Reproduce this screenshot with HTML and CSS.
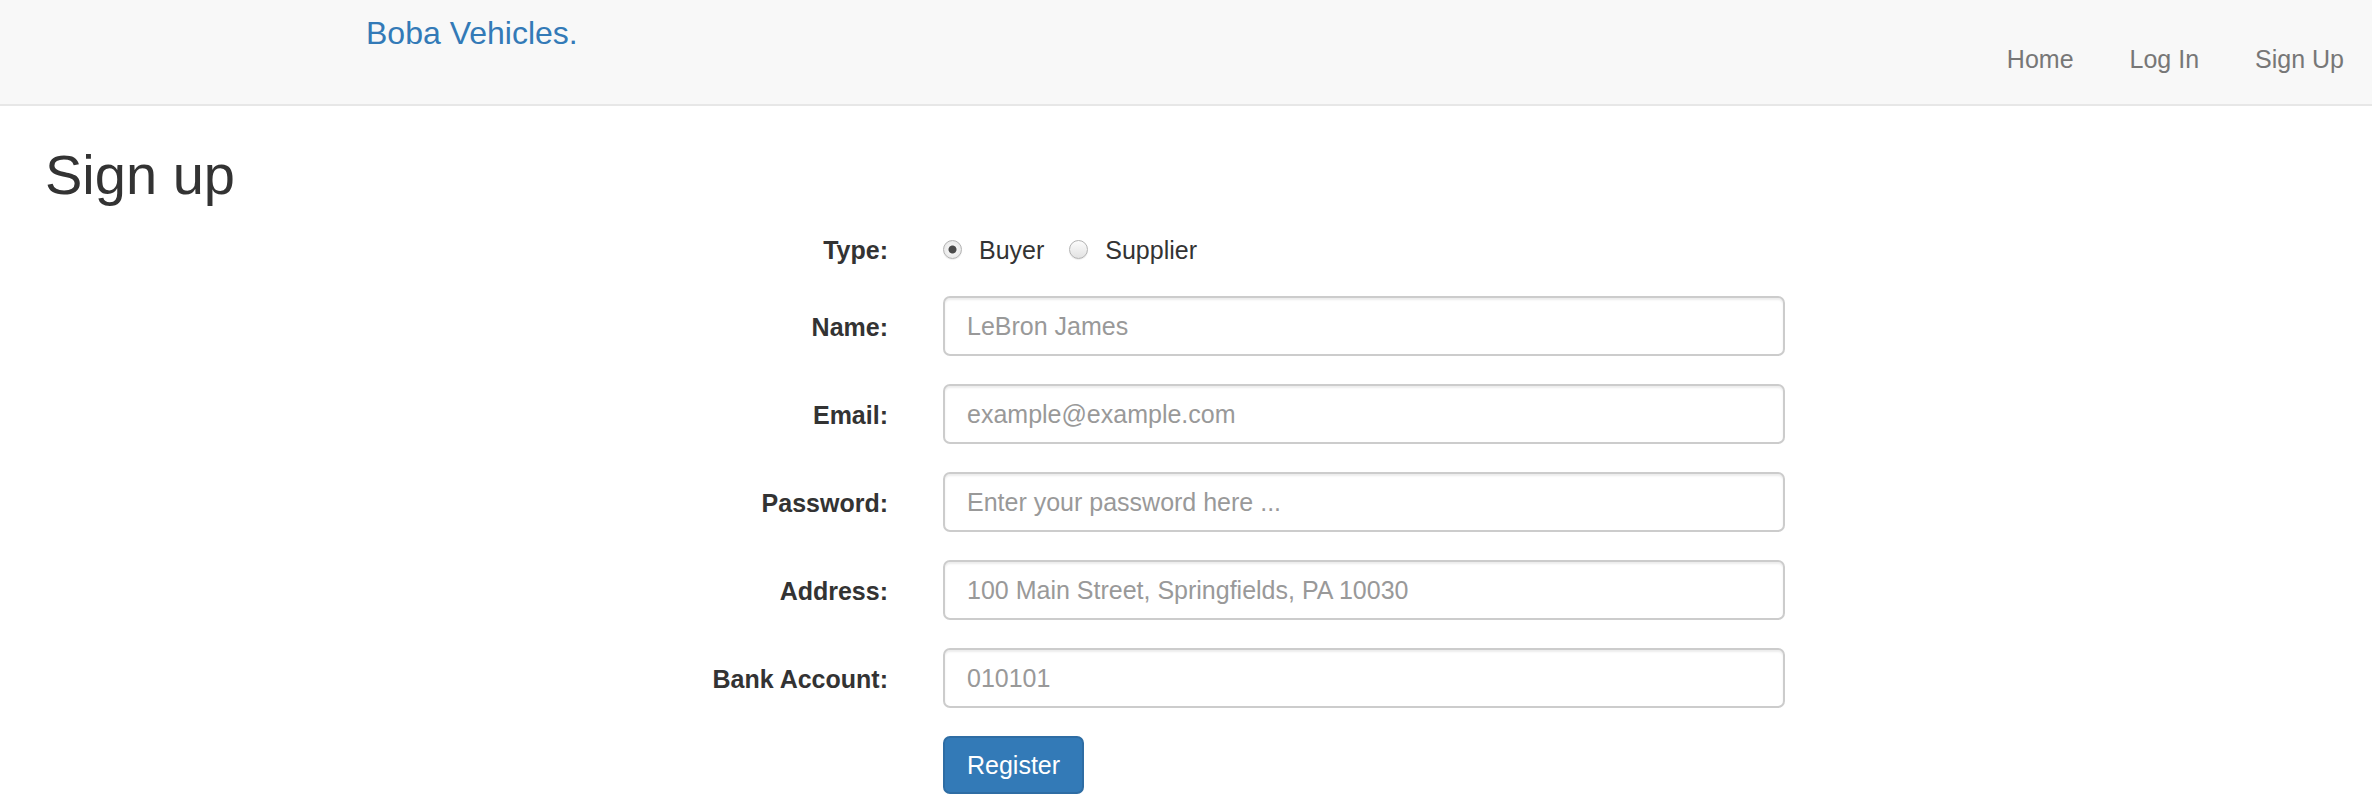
FILE: index.html
```html
<!DOCTYPE html>
<html lang="en">
<head>
<meta charset="utf-8">
<title>Boba Vehicles - Sign up</title>
<link rel="stylesheet" href="styles.css">
</head>
<body>
<nav class="navbar">
  <a class="brand" href="#">Boba Vehicles.</a>
  <ul class="nav">
    <li><a href="#">Home</a></li>
    <li><a href="#">Log In</a></li>
    <li><a href="#">Sign Up</a></li>
  </ul>
</nav>
<main class="page">
  <h2 class="title">Sign up</h2>
  <form class="form">
    <label class="label">Type:</label>
    <div class="radios">
      <label class="radio"><input type="radio" name="type" checked> Buyer</label>
      <label class="radio"><input type="radio" name="type"> Supplier</label>
    </div>
    <label class="label" for="name">Name:</label>
    <input class="control" id="name" type="text" placeholder="LeBron James">
    <label class="label" for="email">Email:</label>
    <input class="control" id="email" type="text" placeholder="example@example.com">
    <label class="label" for="pw">Password:</label>
    <input class="control" id="pw" type="password" placeholder="Enter your password here ...">
    <label class="label" for="addr">Address:</label>
    <input class="control" id="addr" type="text" placeholder="100 Main Street, Springfields, PA 10030">
    <label class="label" for="bank">Bank Account:</label>
    <input class="control" id="bank" type="text" placeholder="010101">
    <span></span>
    <div><button class="btn" type="button">Register</button></div>
  </form>
</main>
</body>
</html>
```
FILE: styles.css
```css
* { box-sizing: border-box; }
html, body { margin: 0; padding: 0; }
body {
  font-family: "Liberation Sans", Arial, Helvetica, sans-serif;
  font-size: 25px;
  line-height: 36px;
  color: #333;
  background: #fff;
}
.navbar {
  display: flex;
  align-items: flex-start;
  justify-content: space-between;
  height: 106px;
  background: #f8f8f8;
  border-bottom: 2px solid #e7e7e7;
  padding-left: 366px;
}
.brand {
  display: block;
  padding-top: 15px;
  font-size: 32px;
  line-height: 36px;
  color: #337ab7;
  text-decoration: none;
}
.nav {
  display: flex;
  list-style: none;
  margin: 0;
  padding: 0;
}
.nav a {
  display: block;
  padding: 41px 28px 0;
  color: #777;
  text-decoration: none;
}
.page { padding: 0 0 0 45px; }
.title {
  margin: 38px 0 14px;
  font-size: 56px;
  line-height: 61px;
  font-weight: 500;
  color: #333;
}
.form {
  display: grid;
  grid-template-columns: 843px 842px;
  column-gap: 55px;
  row-gap: 28px;
  align-items: start;
}
.label {
  text-align: right;
  font-weight: bold;
  padding-top: 13px;
  line-height: 36px;
}
.radios {
  padding-top: 13px;
  line-height: 36px;
}
.radio {
  display: inline-block;
  position: relative;
  padding-left: 36px;
  margin-right: 18px;
}
.radio input {
  -webkit-appearance: none;
  appearance: none;
  position: absolute;
  left: 0;
  top: 8px;
  width: 19px;
  height: 19px;
  margin: 0;
  border-radius: 50%;
  border: 1px solid #b3b3b3;
  background: linear-gradient(#fcfcfc, #e2e2e2);
  box-shadow: 0 1px 1px rgba(0,0,0,.08);
}
.radio input:checked {
  background: radial-gradient(circle, #4a4a4a 0, #4a4a4a 3.5px, #f3f3f3 4.5px, #e0e0e0 100%);
}
.control {
  display: block;
  width: 842px;
  height: 60px;
  padding: 0 22px;
  font-family: inherit;
  font-size: 25px;
  color: #555;
  background: #fff;
  border: 2px solid #ccc;
  border-radius: 7px;
  box-shadow: inset 0 2px 2px rgba(0,0,0,.075);
  outline: none;
}
.control::placeholder { color: #999; }
.btn {
  display: inline-block;
  height: 58px;
  padding: 0 22px;
  font-family: inherit;
  font-size: 25px;
  color: #fff;
  background: #337ab7;
  border: 2px solid #2e6da4;
  border-radius: 7px;
  cursor: pointer;
}
```
